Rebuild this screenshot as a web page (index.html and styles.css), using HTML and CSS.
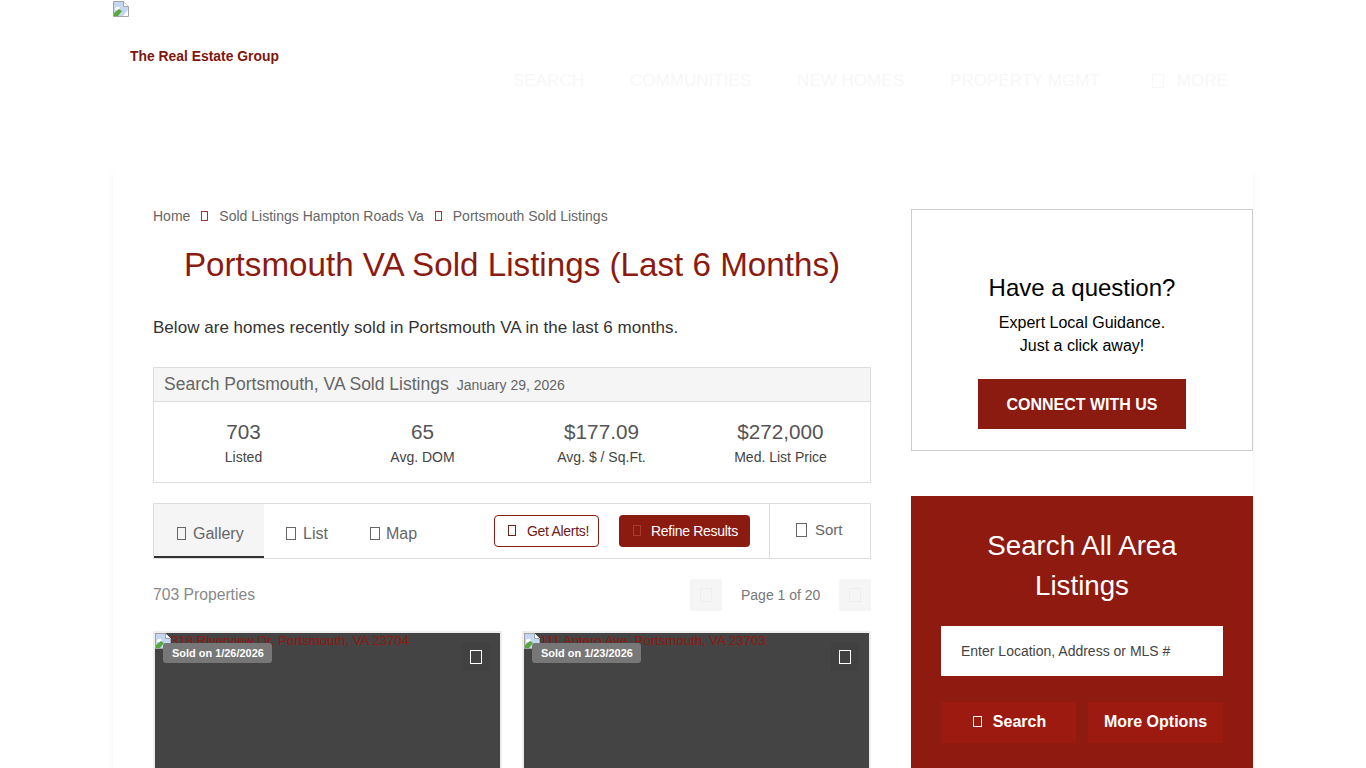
FILE: index.html
```html
<!DOCTYPE html>
<html lang="en">
<head>
<meta charset="utf-8">
<title>Portsmouth VA Sold Listings</title>
<link rel="stylesheet" href="styles.css">
</head>
<body>
<svg class="defs" width="0" height="0" aria-hidden="true">
  <symbol id="broken" viewBox="0 0 16 16">
    <path d="M.5.5H10.5L15.5 5.5V15.5H.5Z" fill="#fff" stroke="#a3a3a3"/>
    <path d="M1 1H10L15 6V9L10 15H1Z" fill="#c3d6f2"/>
    <path d="M10.5.5V5.5H15.5" fill="#fff" stroke="#a3a3a3"/>
    <path d="M2 7C4 5 6 6 7 7L5 9L2 9Z" fill="#fff"/>
    <path d="M1 15V12L6 8L9 10L5 15Z" fill="#5aa83c"/>
    <path d="M11 15L15 10V15Z" fill="#fff"/>
  </symbol>
</svg>
<header class="site-header">
  <div class="brand">
    <svg class="broken"><use href="#broken"/></svg>
    <div class="brand-name">The Real Estate Group</div>
  </div>
  <nav class="nav">
    <a>SEARCH</a>
    <a>COMMUNITIES</a>
    <a>NEW HOMES</a>
    <a>PROPERTY MGMT</a>
    <a class="nav-more"><span class="tofu tofu-nav"></span>MORE</a>
  </nav>
</header>
<main class="page">
  <section class="content">
    <div class="crumbs">
      <a>Home</a><span class="tofu tofu-crumb"></span><a>Sold Listings Hampton Roads Va</a><span class="tofu tofu-crumb"></span><a>Portsmouth Sold Listings</a>
    </div>
    <h1 class="title">Portsmouth VA Sold Listings (Last 6 Months)</h1>
    <p class="intro">Below are homes recently sold in Portsmouth VA in the last 6 months.</p>
    <div class="stats">
      <div class="stats-head"><span class="stats-title">Search Portsmouth, VA Sold Listings</span><span class="stats-date">January 29, 2026</span></div>
      <div class="stats-body">
        <div class="stat"><div class="stat-num">703</div><div class="stat-label">Listed</div></div>
        <div class="stat"><div class="stat-num">65</div><div class="stat-label">Avg. DOM</div></div>
        <div class="stat"><div class="stat-num">$177.09</div><div class="stat-label">Avg. $ / Sq.Ft.</div></div>
        <div class="stat"><div class="stat-num">$272,000</div><div class="stat-label">Med. List Price</div></div>
      </div>
    </div>
    <div class="toolbar">
      <a class="tab tab-active"><span class="tofu tofu-tab"></span>Gallery</a>
      <a class="tab tab-list"><span class="tofu tofu-tab"></span>List</a>
      <a class="tab tab-map"><span class="tofu tofu-tab"></span>Map</a>
      <a class="btn btn-alert"><span class="tofu tofu-btn"></span>Get Alerts!</a>
      <a class="btn btn-refine"><span class="tofu tofu-btn"></span>Refine Results</a>
      <a class="sort"><span class="tofu tofu-sort"></span>Sort</a>
    </div>
    <div class="count-row">
      <span class="count">703 Properties</span>
      <div class="pager">
        <span class="page-btn"><span class="tofu tofu-page"></span></span>
        <span class="page-text">Page 1 of 20</span>
        <span class="page-btn"><span class="tofu tofu-page"></span></span>
      </div>
    </div>
    <div class="cards">
      <article class="card">
        <svg class="broken card-broken"><use href="#broken"/></svg>
        <span class="alt">318 Riverview Dr, Portsmouth, VA 23704</span>
        <span class="badge">Sold on 1/26/2026</span>
        <span class="fav"><span class="tofu tofu-fav"></span></span>
      </article>
      <article class="card">
        <svg class="broken card-broken"><use href="#broken"/></svg>
        <span class="alt">111 Antero Ave, Portsmouth, VA 23703</span>
        <span class="badge">Sold on 1/23/2026</span>
        <span class="fav"><span class="tofu tofu-fav"></span></span>
      </article>
    </div>
  </section>
  <aside class="side">
    <div class="ask">
      <h2 class="ask-title">Have a question?</h2>
      <p class="ask-text">Expert Local Guidance.<br>Just a click away!</p>
      <a class="ask-btn">CONNECT WITH US</a>
    </div>
    <div class="search">
      <h2 class="search-title">Search All Area Listings</h2>
      <div class="search-input">Enter Location, Address or MLS #</div>
      <div class="search-btns">
        <a class="search-btn search-btn-icon"><span class="tofu tofu-search"></span>Search</a>
        <a class="search-btn">More Options</a>
      </div>
    </div>
  </aside>
</main>
</body>
</html>
```
FILE: styles.css
```css
* { box-sizing: border-box; }
html, body { margin: 0; height: 768px; overflow: hidden; }
body { background: #fff; font-family: "Liberation Sans", Arial, sans-serif; color: #333; }
.defs { position: absolute; }
.tofu { display: inline-block; border: 1px solid currentColor; flex: none; }

.site-header { width: 1140px; height: 168px; margin: 0 auto; display: flex; }
.broken { display: block; width: 16px; height: 16px; }
.brand { width: 400px; padding-top: 1px; }
.brand-name { margin: 31px 0 0 17px; font-size: 13.9px; line-height: 16px; font-weight: 700; color: #7f160e; }
.nav { flex: 1; display: flex; align-items: center; gap: 46px; height: 162px; font-size: 17.05px; color: #f7f7f7; }
.nav-more { display: flex; align-items: center; margin-left: 6px; }
.tofu-nav { width: 12px; height: 14px; margin-right: 13px; }

.page { width: 1140px; height: 600px; margin: 0 auto; padding: 41px 0 0 40px; display: flex; gap: 40px; box-shadow: 0 6px 6px rgba(0,0,0,.06); overflow: hidden; }
.content { width: 718px; flex: none; }
.side { width: 342px; flex: none; }

.crumbs { display: flex; align-items: center; height: 14px; font-size: 14px; color: #666; }
.tofu-crumb { width: 7px; height: 10px; margin: 0 11px; color: #9b3a32; }
.title { margin: 20px 0 0; font-size: 33.2px; line-height: 44px; font-weight: 400; text-align: center; color: #8b1a10; }
.intro { margin: 29px 0 0; font-size: 17px; letter-spacing: .03px; line-height: 24px; color: #333; }

.stats { margin-top: 27px; border: 1px solid #ddd; height: 116px; }
.stats-head { height: 34px; background: #f5f5f5; border-bottom: 1px solid #ddd; padding: 0 10px; display: flex; align-items: baseline; line-height: 33px; color: #666; }
.stats-title { font-size: 17.5px; }
.stats-date { font-size: 14px; margin-left: 8px; }
.stats-body { display: grid; grid-template-columns: repeat(4, 1fr); text-align: center; padding-top: 17px; }
.stat-num { font-size: 20.7px; line-height: 26px; color: #555; }
.stat-label { font-size: 14px; line-height: 16px; margin-top: 4px; color: #444; }

.toolbar { margin-top: 20px; height: 56px; border: 1px solid #ddd; display: flex; align-items: stretch; color: #666; font-size: 16px; }
.tab { display: flex; align-items: center; padding-top: 5px; }
.tab-active { width: 110px; padding-top: 7px; padding-left: 23px; background: #f5f5f5; border-bottom: 2px solid #333; }
.tab-list { width: 84px; padding-left: 22px; }
.tab-map { width: 146px; padding-left: 22px; }
.tofu-tab { width: 10px; height: 13px; margin-right: 7px; }
.tab-active .tofu-tab { width: 9px; }
.tab-map .tofu-tab { margin-right: 6px; }
.btn { align-self: center; height: 32px; margin-top: -1px; border-radius: 4px; display: flex; align-items: center; font-size: 14px; letter-spacing: -.3px; }
.btn-alert { width: 105px; padding-left: 13px; border: 1px solid #8b1a10; color: #6d2018; }
.btn-refine { width: 131px; margin-left: 20px; padding-left: 14px; background: #8b1a10; color: #fff; }
.btn-refine .tofu { color: #a83a30; }
.tofu-btn { width: 8px; height: 11px; margin-right: 10px; }
.btn-alert .tofu-btn { margin-right: 11px; }
.sort { margin-left: 19px; flex: 1; border-left: 1px solid #ddd; display: flex; align-items: center; padding: 0 0 3px 26px; font-size: 15px; }
.tofu-sort { width: 11px; height: 14px; margin-right: 8px; }

.count-row { margin-top: 20px; height: 32px; display: flex; justify-content: space-between; align-items: center; }
.count { font-size: 15.7px; color: #888; }
.pager { display: flex; align-items: center; }
.page-btn { width: 32px; height: 32px; background: #f5f5f5; display: flex; align-items: center; justify-content: center; border-radius: 2px; color: #eee; }
.tofu-page { width: 12px; height: 14px; }
.page-text { width: 117px; padding-left: 19px; font-size: 14px; color: #777; }

.cards { margin-top: 20px; display: grid; grid-template-columns: 349px 349px; column-gap: 20px; }
.card { position: relative; height: 200px; background: #444; border: 2px solid #eee; border-bottom: 0; }
.card-broken { position: absolute; left: 0; top: 0; }
.alt { position: absolute; left: 16px; top: 0; font-size: 13.2px; line-height: 16px; color: #8b1a10; white-space: nowrap; }
.badge { position: absolute; left: 8px; top: 10px; height: 20px; padding: 0 8px 0 9px; background: #777; border-radius: 3px; font-size: 10.95px; line-height: 20px; font-weight: 700; color: #fff; }
.fav { position: absolute; right: 10px; top: 10px; width: 28px; height: 28px; background: #414141; display: flex; align-items: center; justify-content: center; color: #fff; }
.tofu-fav { width: 12px; height: 14px; }

.ask { height: 242px; border: 1px solid #ccc; padding-top: 62px; text-align: center; color: #000; }
.ask-title { margin: 0; font-size: 24px; line-height: 32px; font-weight: 400; }
.ask-text { margin: 7px 0 0; font-size: 16px; line-height: 23px; }
.ask-btn { display: block; width: 208px; height: 50px; margin: 22px auto 0; background: #8b1a10; color: #fff; font-size: 16px; font-weight: 700; line-height: 52px; }

.search { margin-top: 45px; height: 300px; background: #8f1a10; padding: 30px 30px 0; }
.search-title { margin: 0 auto; width: 240px; font-size: 27.7px; line-height: 40px; font-weight: 400; text-align: center; color: #fff; }
.search-input { margin-top: 20px; height: 50px; background: #fff; padding-left: 20px; font-size: 14px; line-height: 50px; color: #444; }
.search-btns { margin-top: 26px; display: flex; gap: 12px; }
.search-btn { flex: none; width: 135px; height: 41px; padding-bottom: 2px; background: #9c1a10; color: #fff; font-size: 16px; font-weight: 700; display: flex; align-items: center; justify-content: center; }
.search-btn-icon { padding-left: 2px; }
.tofu-search { width: 9px; height: 11px; margin-right: 11px; }
```
